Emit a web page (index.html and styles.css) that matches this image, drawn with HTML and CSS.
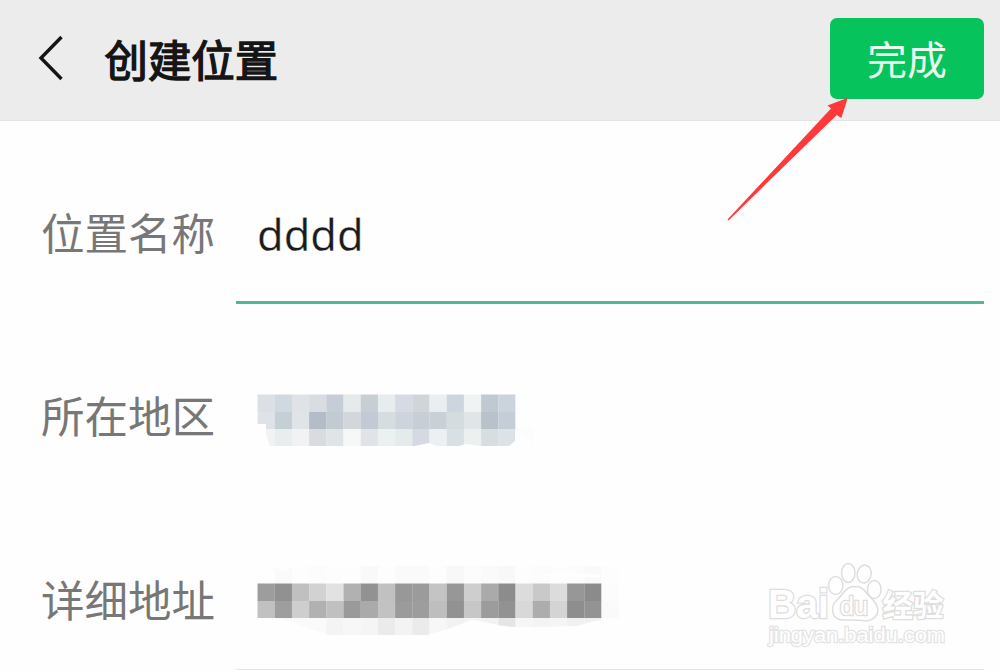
FILE: index.html
```html
<!DOCTYPE html>
<html lang="zh-CN">
<head>
<meta charset="utf-8">
<title>创建位置</title>
<link rel="stylesheet" href="styles.css">
</head>
<body>
<div class="screen">
  <header class="bar">
    <svg class="back" viewBox="0 0 26 46" aria-label="返回"><path d="M23.500 2 3 23 23.500 44"/></svg>
    <h1 class="title">创建位置</h1>
    <button class="done">完成</button>
  </header>
  <main class="form">
    <div class="row">
      <span class="label">位置名称</span>
      <div class="field active"><span class="value">dddd</span></div>
    </div>
    <div class="row">
      <span class="label">所在地区</span>
      <div class="field plain">
        <svg class="mosaic region" viewBox="0 0 292 60" id="region"></svg>
      </div>
    </div>
    <div class="row">
      <span class="label">详细地址</span>
      <div class="field">
        <svg class="mosaic address" viewBox="0 0 362 72" id="address"></svg>
      </div>
    </div>
  </main>
  <svg class="arrow" viewBox="0 0 124 126"><path d="M.5 122.500 104 11.500 100.500 8.500 120.800.800 114.300 21 109.800 18 1.500 123.500z"/></svg>
  <svg class="watermark" viewBox="0 0 200 100">
    <text class="brand" x="18" y="68" textLength="61" lengthAdjust="spacingAndGlyphs">Bai</text>
    <g class="paw">
      <ellipse cx="85.700" cy="35.500" rx="7.200" ry="9"/>
      <ellipse cx="98.300" cy="23" rx="6.700" ry="9.500"/>
      <ellipse cx="114.200" cy="24" rx="7" ry="9" transform="rotate(10 114.200 24)"/>
      <ellipse cx="124.300" cy="39.500" rx="6.800" ry="9"/>
      <path d="M105 36.500C95 36 93 45 87 50C80 56 81 69 92 70C99 70 106 69.500 113 70.500C124 72 130 64 127 56C124 49 118 46 115 41C112 37.500 109 36.500 105 36.500z"/>
    </g>
    <text class="du" x="90" y="65" textLength="28" lengthAdjust="spacingAndGlyphs">du</text>
    <text class="brand cn" x="132.500" y="66" textLength="61" lengthAdjust="spacingAndGlyphs">经验</text>
    <text class="url" x="19" y="92" textLength="176" lengthAdjust="spacingAndGlyphs">jingyan.baidu.com</text>
  </svg>
</div>
<script src="mosaic.js"></script>
</body>
</html>
```
FILE: styles.css
```css
* { box-sizing: border-box; }
body {
  margin: 0;
  background: #fefefe;
  font-family: "Noto Sans CJK SC", "Noto Sans", sans-serif;
}
.screen {
  position: relative;
  width: 1000px;
  height: 670px;
  overflow: hidden;
}
.bar {
  display: flex;
  align-items: center;
  height: 121px;
  padding: 0 16px 4px 38px;
  background: #ececec;
  border-bottom: 1px solid #e4e4e4;
}
.back { width: 26px; height: 46px; }
.back path { fill: none; stroke: #151515; stroke-width: 3.4; }
.title {
  margin: 0 0 0 40.5px;
  font-size: 43.4px;
  line-height: 60px;
  font-weight: 400;
  color: #151515;
  -webkit-text-stroke: 1.4px #151515;
}
.done {
  width: 154px;
  height: 81px;
  margin-left: auto;
  padding: 0;
  border: 0;
  border-radius: 7px;
  background: #06c45b;
  color: #e9faef;
  font: 400 40px/81px "Noto Sans CJK SC", sans-serif;
}
.form {
  display: grid;
  grid-template-rows: 183px 184px 182px;
}
.row {
  display: grid;
  grid-template-columns: 195px 748px;
  padding-left: 41px;
}
.label {
  padding-top: 80px;
  font-size: 43.5px;
  line-height: 62px;
  color: #777;
}
.field {
  border-bottom: 1px solid #e3e3e3;
  padding-left: 21px;
}
.active { border-bottom: 3px solid #50b893; }
.plain { border-bottom: 0; }
.value {
  display: block;
  padding-top: 83px;
  font: 400 43.3px/62px "Noto Sans", sans-serif;
  color: #1b1b1b;
  -webkit-text-stroke: 0.3px #fefefe;
}
.mosaic { display: block; }
.region { width: 292px; height: 60px; margin-top: 90px; }
.address { width: 362px; height: 72px; margin-top: 78px; }
.arrow {
  position: absolute;
  left: 727px;
  top: 97px;
  width: 124px;
  height: 126px;
  fill: #ff3939;
}
.watermark {
  position: absolute;
  left: 750px;
  top: 550px;
  width: 200px;
  height: 100px;
  fill: #fff;
  stroke: #dedede;
  stroke-width: 1.5px;
}
.watermark text { paint-order: stroke; stroke-width: 2.6px; }
.brand { font: 700 40px/1 "Liberation Sans", sans-serif; }
.brand.cn { font: 700 30px/1 "Noto Sans CJK SC", sans-serif; }
.du { font: 400 25px/1 "Liberation Sans", sans-serif; }
.watermark .url { font: 400 20px/1 "Liberation Sans", sans-serif; stroke-width: 2.4px; stroke: #e4e4e4; }
```
FILE: mosaic.js
```js
const NS = "http://www.w3.org/2000/svg";
const CELL = 17.2;

function draw(id, rows, offsets, covers) {
  const svg = document.getElementById(id);
  rows.forEach((row, r) => {
    row.split(" ").forEach((color, c) => {
      const rect = document.createElementNS(NS, "rect");
      rect.setAttribute("x", 0.5 + c * CELL);
      rect.setAttribute("y", offsets[r]);
      rect.setAttribute("width", CELL + 0.1);
      rect.setAttribute("height", offsets[r + 1] - offsets[r]);
      rect.setAttribute("fill", "#" + color);
      svg.appendChild(rect);
    });
  });
  covers.forEach(d => {
    const path = document.createElementNS(NS, "path");
    path.setAttribute("d", d);
    path.setAttribute("fill", "#fefefe");
    svg.appendChild(path);
  });
}

draw("region", [
  "dae0e4 d0d8e0 dfe2e6 d9dce1 c7cdd8 e5eaea c7cfd5 e7edec d5dae4 d0d5d9 eaeef0 cdd5de f0f3f4 c0c9d1 cbd3dc fdfefe",
  "dfe2e8 c4d0d6 dfe4e7 b2bdc8 c1cbd1 d3d7dc c1cad5 d5dde0 cdd4dc c7ced5 c9d1d6 d5dcdf e0e5e8 b7c2cb c5cdd7 fdfefe",
  "f1f3f3 e8edee f0f2f3 d8dbe0 dfe4e7 f6f8f7 e0e4e8 ebf0f0 e5ebea d4d9e2 ecf0f2 d8e0e4 ecf0ef d8dde1 dce2e5 fbfcfc"
], [0.5, 18, 35, 52], [
  "M0 30H9V40L13 53H0z",
  "M153 53 167 50 172 49 180 52 202 52 209 50 225 52V54H153z",
  "M251 53 258 47V36L275 49V54z"
]);
draw("address", [
  "fefefe fafafa fdfdfd fcfcfc fdfdfd fdfdfd f9f9f9 fdfdfd fafafa fafafa fdfdfd f8f8f8 fcfcfc fafafa f8f8f8 fdfdfd fcfcfc fdfdfd fcfcfc f9f9f9 fdfdfd",
  "9d9d9d 919191 c0c0c0 d2d2d2 e2e2e2 b1b1b1 929292 c1c1c1 989898 9b9b9b c4c4c4 979797 cecece aaaaaa 8c8c8c dcdcdc c9c9c9 dcdcdc 979797 8b8b8b fcfcfc",
  "c1c1c1 9e9e9e cecece b1b1b1 c0c0c0 9a9a9a aaaaaa c2c2c2 9b9b9b 9d9d9d bebebe 929292 c7c7c7 9c9c9c 929292 d8d8d8 adadad d4d4d4 8e8e8e 939393 fafafa",
  "fcfcfc f8f8f8 fafafa fafafa f4f4f4 f7f7f7 f5f5f5 ebebeb f3f3f3 ebebeb f7f7f7 f2f2f2 f5f5f5 f2f2f2 e5e5e5 f6f6f6 f4f4f4 f5f5f5 f1f1f1 f0f0f0 fcfcfc"
], [0, 17.5, 35, 52, 69], [
  "M0 52H17L35 55 50 62 70 68V70H0z",
  "M172 68 188 64 204 58 215 54 228 56 240 59 255 61H275L320 60 337 55 345 54V70H172z",
  "M345 52H362V70H345z",
  "M0 0H17L25 6 35 2V0z",
  "M287 8 310 7 342 8V12L330 11 287 10z"
]);
```
